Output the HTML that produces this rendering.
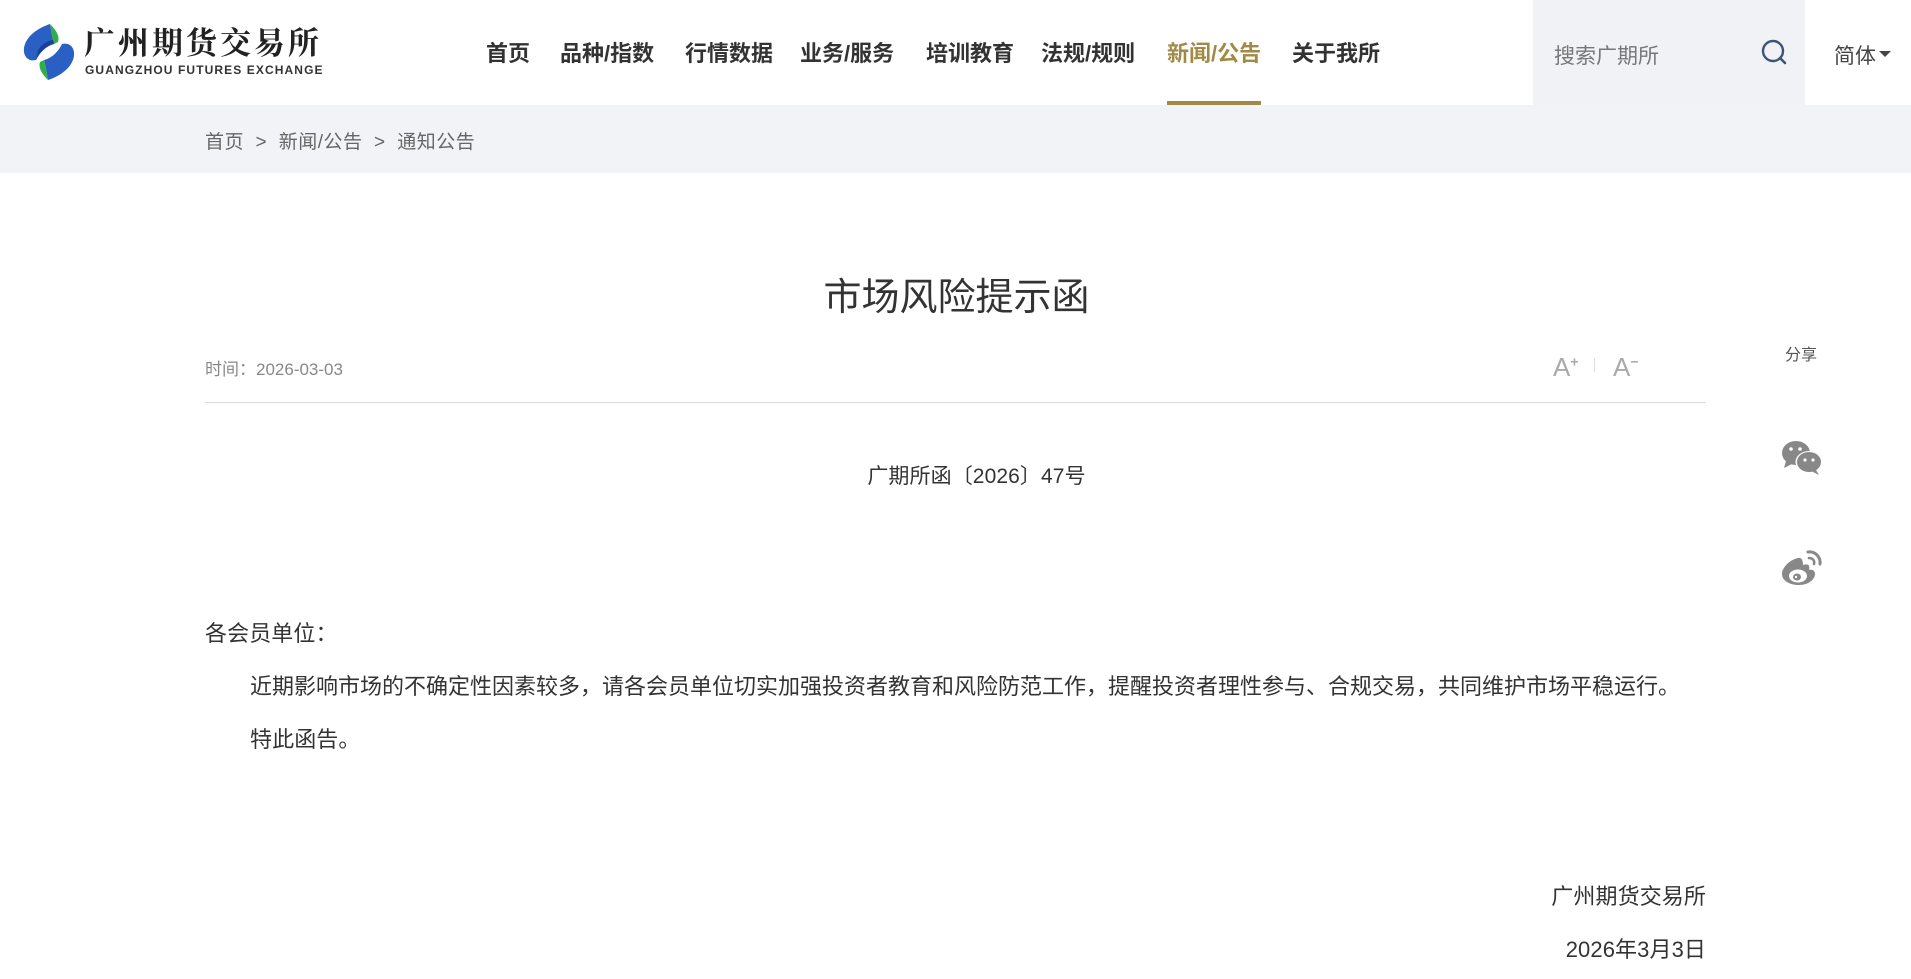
<!DOCTYPE html>
<html><head><meta charset="utf-8"><style>
*{margin:0;padding:0;box-sizing:border-box}
body{width:1911px;height:979px;overflow:hidden;background:#fff;font-family:"Liberation Sans","Noto Sans CJK SC",sans-serif;color:#333;position:relative}
.a{position:absolute;white-space:nowrap}
.nav{top:40px;font-size:22px;font-weight:bold;color:#333;line-height:28px}
.search{left:1533px;top:0;width:272px;height:105px;background:#f0f2f5}
.crumb{left:0;top:105px;width:1911px;height:68px;background:#f2f3f6}
.body{font-size:22px;color:#333;line-height:30px;letter-spacing:0.1px}
</style></head><body>
<svg class="a" style="left:20px;top:22px" width="58" height="60" viewBox="0 0 58 60">
<path d="M30 2 C18 6 6 14 4 26 C3 34 8 40 16 38 C20 30 26 24 34 22 C32 14 31 8 30 2Z" fill="#2a5fc4"/>
<path d="M34 22 C26 24 20 30 16 38 L18 28 C22 22 28 18 34 18Z" fill="#1b3f9a"/>
<path d="M30 2 C36 8 40 14 38 20 L34 22 C32 14 31 8 30 2Z" fill="#2fae4a"/>
<path d="M28 58 C40 54 52 46 54 34 C55 26 50 20 42 22 C38 30 32 36 24 38 C26 46 27 52 28 58Z" fill="#2a5fc4"/>
<path d="M28 58 C22 52 18 46 20 40 L24 38 C26 46 27 52 28 58Z" fill="#2fae4a"/>
</svg>
<div class="a" style="left:84px;top:22px;font-size:31px;line-height:38px;font-weight:bold;color:#222;letter-spacing:3px;font-family:'Noto Serif CJK SC','Liberation Serif',serif">广州期货交易所</div>
<div class="a" style="left:85px;top:63px;font-size:12px;line-height:14px;font-weight:bold;color:#333;letter-spacing:1.1px">GUANGZHOU FUTURES EXCHANGE</div>
<div class="a nav" style="left:486px">首页</div>
<div class="a nav" style="left:560px">品种/指数</div>
<div class="a nav" style="left:685px">行情数据</div>
<div class="a nav" style="left:800px">业务/服务</div>
<div class="a nav" style="left:926px">培训教育</div>
<div class="a nav" style="left:1041px">法规/规则</div>
<div class="a nav" style="left:1167px;color:#a08a45">新闻/公告</div>
<div class="a" style="left:1167px;top:101px;width:94px;height:4px;background:#a08a45"></div>
<div class="a nav" style="left:1292px">关于我所</div>
<div class="a search"></div>
<div class="a" style="left:1554px;top:40px;font-size:21px;color:#777">搜索广期所</div>
<svg class="a" style="left:1760px;top:38px" width="30" height="30" viewBox="0 0 30 30"><circle cx="13" cy="13" r="10" fill="none" stroke="#3a5575" stroke-width="2.4"/><path d="M20 20 L25 25" stroke="#3a5575" stroke-width="2.6" stroke-linecap="round"/></svg>
<div class="a" style="left:1834px;top:40px;font-size:21px;color:#444">简体</div>
<div class="a" style="left:1879px;top:51px;width:0;height:0;border-left:6px solid transparent;border-right:6px solid transparent;border-top:6px solid #444"></div>
<div class="a crumb"></div>
<div class="a" style="left:205px;top:127px;font-size:19px;color:#666;letter-spacing:0.5px">首页 &nbsp;&gt;&nbsp; 新闻/公告 &nbsp;&gt;&nbsp; 通知公告</div>
<div class="a" style="left:0;width:1911px;text-align:center;top:266px;font-size:38px;color:#333"><span style="position:relative;left:1px">市场风险提示函</span></div>
<div class="a" style="left:205px;top:355px;font-size:17px;color:#888">时间：2026-03-03</div>
<div class="a" style="left:1553px;top:352px;font-size:26px;color:#aaa">A<sup style="font-size:14px;font-weight:bold">+</sup></div>
<div class="a" style="left:1594px;top:358px;width:1px;height:14px;background:#ddd"></div>
<div class="a" style="left:1613px;top:352px;font-size:26px;color:#aaa">A<sup style="font-size:14px;font-weight:bold">−</sup></div>
<div class="a" style="left:205px;top:402px;width:1501px;height:1px;background:#ddd"></div>
<div class="a" style="left:1785px;top:341px;font-size:16px;color:#555">分享</div>
<svg class="a" style="left:1781px;top:440px" width="42" height="37" viewBox="0 0 42 37">
<ellipse cx="15" cy="13" rx="14" ry="12" fill="#888"/><path d="M5 21 L3 28 L11 24Z" fill="#888"/>
<ellipse cx="28" cy="22" rx="13.5" ry="11" fill="#fff"/><ellipse cx="28" cy="22" rx="12" ry="10" fill="#888"/><path d="M35 30 L38 35 L30 31Z" fill="#888"/>
<circle cx="10" cy="9" r="1.8" fill="#fff"/><circle cx="19" cy="9" r="1.8" fill="#fff"/><circle cx="24" cy="20" r="1.6" fill="#fff"/><circle cx="32" cy="20" r="1.6" fill="#fff"/>
</svg>
<svg class="a" style="left:1781px;top:548px" width="42" height="38" viewBox="0 0 42 38">
<path d="M17 10 C8 12 1 20 1 26 C1 33 9 37 18 37 C28 37 34 31 34 26 C34 22 30 21 28 22 C29 18 28 15 22 17 C22 13 21 9 17 10Z" fill="#888"/>
<ellipse cx="17" cy="28" rx="9" ry="6.5" fill="#fff"/><ellipse cx="16" cy="29" rx="4" ry="3.5" fill="#888"/><circle cx="15" cy="29" r="1.2" fill="#fff"/>
<path d="M27 4 C34 3 40 9 39 16" fill="none" stroke="#888" stroke-width="3" stroke-linecap="round"/>
<path d="M28 10 C31 10 34 12 33 16" fill="none" stroke="#888" stroke-width="2.6" stroke-linecap="round"/>
</svg>
<div class="a body" style="left:0;width:1911px;text-align:center;top:462px;padding-left:42px;font-size:21px">广期所函〔2026〕47号</div>
<div class="a body" style="left:205px;top:619px">各会员单位：</div>
<div class="a body" style="left:250px;top:672px;letter-spacing:0">近期影响市场的不确定性因素较多，请各会员单位切实加强投资者教育和风险防范工作，提醒投资者理性参与、合规交易，共同维护市场平稳运行。</div>
<div class="a body" style="left:250px;top:725px">特此函告。</div>
<div class="a body" style="right:205px;top:882px">广州期货交易所</div>
<div class="a body" style="right:205px;top:935px">2026年3月3日</div>
</body></html>
